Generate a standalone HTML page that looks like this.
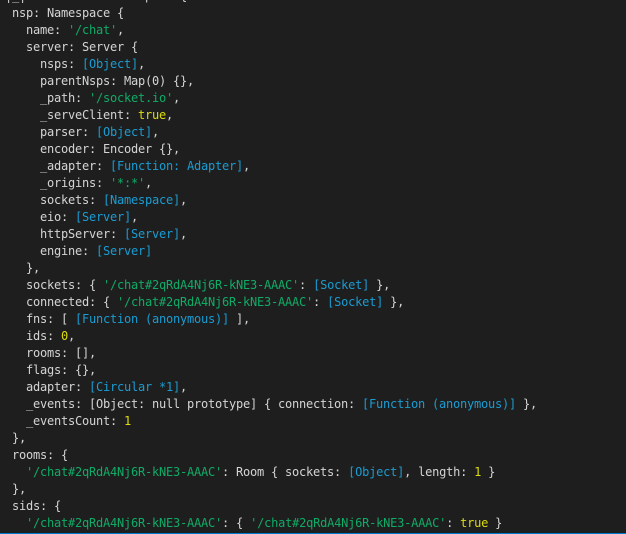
<!DOCTYPE html>
<html><head><meta charset="utf-8"><style>
html,body{margin:0;padding:0;background:#1e1e1e;width:626px;height:534px;overflow:hidden}
#t{position:absolute;left:5px;top:-12px;margin:0;font:12px/17px "DejaVu Sans Mono",monospace;letter-spacing:-.224px;color:#d4d4d4;white-space:pre}
.g{color:#10ab66}.c{color:#1a9cd2}.y{color:#dcdc10}
#b{position:absolute;left:0;top:533px;width:626px;height:1px;background:#007acc}
</style></head><body>
<pre id="t">|_|                 p    {
 nsp: Namespace {
   name: <span class="g">'/chat'</span>,
   server: Server {
     nsps: <span class="c">[Object]</span>,
     parentNsps: Map(0) {},
     _path: <span class="g">'/socket.io'</span>,
     _serveClient: <span class="y">true</span>,
     parser: <span class="c">[Object]</span>,
     encoder: Encoder {},
     _adapter: <span class="c">[Function: Adapter]</span>,
     _origins: <span class="g">'*:*'</span>,
     sockets: <span class="c">[Namespace]</span>,
     eio: <span class="c">[Server]</span>,
     httpServer: <span class="c">[Server]</span>,
     engine: <span class="c">[Server]</span>
   },
   sockets: { <span class="g">'/chat#2qRdA4Nj6R-kNE3-AAAC'</span>: <span class="c">[Socket]</span> },
   connected: { <span class="g">'/chat#2qRdA4Nj6R-kNE3-AAAC'</span>: <span class="c">[Socket]</span> },
   fns: [ <span class="c">[Function (anonymous)]</span> ],
   ids: <span class="y">0</span>,
   rooms: [],
   flags: {},
   adapter: <span class="c">[Circular *1]</span>,
   _events: [Object: null prototype] { connection: <span class="c">[Function (anonymous)]</span> },
   _eventsCount: <span class="y">1</span>
 },
 rooms: {
   <span class="g">'/chat#2qRdA4Nj6R-kNE3-AAAC'</span>: Room { sockets: <span class="c">[Object]</span>, length: <span class="y">1</span> }
 },
 sids: {
   <span class="g">'/chat#2qRdA4Nj6R-kNE3-AAAC'</span>: { <span class="g">'/chat#2qRdA4Nj6R-kNE3-AAAC'</span>: <span class="y">true</span> }
</pre>
<div id="b"></div>
</body></html>
